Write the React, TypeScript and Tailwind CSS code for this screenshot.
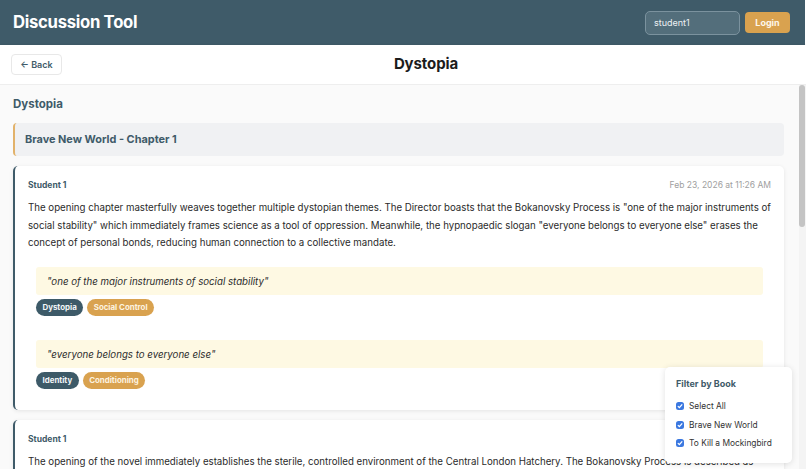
const font = { fontFamily: "Inter, 'Liberation Sans', sans-serif" };

function Check() {
  return (
    <span className="flex h-[8px] w-[8px] items-center justify-center rounded-[2.5px] bg-[#3b78e0]">
      <svg viewBox="0 0 10 10" className="h-[8px] w-[8px]" fill="none" stroke="#fff" strokeWidth="1.6">
        <path d="M2.3 5.2 4.2 7.1 7.8 3" />
      </svg>
    </span>
  );
}

function Tag({ children, amber }: { children: string; amber?: boolean }) {
  return (
    <span className={`flex h-[17px] items-center rounded-[9px] px-[6.5px] pt-[1px] text-[7.9px] font-bold ${amber ? "bg-[#d9a24f] text-[#fdf3e0]" : "bg-[#3d5a68] text-[#f2f6f8]"}`}>
      {children}
    </span>
  );
}

function Quote({ text, tags }: { text: string; tags: string[] }) {
  return (
    <div className="flex flex-col gap-[4px]">
      <div className="flex h-[28px] items-center rounded-[3px] bg-[#fef9e3] px-[11px] pt-[3px] text-[9.7px] italic text-[#2b2b2b]">{text}</div>
      <div className="flex gap-[4px]">
        <Tag>{tags[0]}</Tag>
        <Tag amber>{tags[1]}</Tag>
      </div>
    </div>
  );
}

export default function App() {
  return (
    <div style={font} className="relative flex h-[469px] w-[806px] flex-col overflow-hidden bg-white text-[#2b2b2b]">
      <header className="mr-[1px] flex h-[45px] shrink-0 items-center justify-between bg-[#3f5b69] pl-[13px] pr-[15px]">
        <h1 className="text-[16.7px] font-bold tracking-[-0.3px] text-white">Discussion Tool</h1>
        <div className="flex items-center gap-[5px]">
          <div className="flex h-[24px] w-[95px] items-center rounded-[5px] border border-[#7b929e] bg-[#536e7b] px-[8px] text-[9px] text-[#eef2f4]">student1</div>
          <button className="flex h-[21px] w-[45px] items-center justify-center rounded-[4px] bg-[#d9a24f] text-[9px] font-bold text-[#fdf6ea]">Login</button>
        </div>
      </header>
      <div className="flex h-[40px] shrink-0 items-center border-b border-[#eeeeee] bg-white pl-[11px] pr-[16px] shadow-[0_-1px_2px_rgba(0,0,0,0.05)]">
        <button className="flex h-[21px] w-[51px] items-center justify-center rounded-[4px] border border-[#e8e8e8] bg-white text-[9px] font-semibold text-[#3f5b69]">← Back</button>
        <h2 className="flex-1 text-center text-[15px] font-bold tracking-[-0.1px] text-[#1c1c1c]">Dystopia</h2>
      </div>
      <div className="flex min-h-0 flex-1">
        <main className="min-w-0 flex-1 overflow-hidden bg-[#fafafa] pl-[13px] pr-[15px] pt-[12px]">
          <h3 className="text-[11.5px] font-bold leading-[15px] text-[#3f5b69]">Dystopia</h3>
          <div className="mt-[11px] flex h-[33px] items-center rounded-[4px] border-l-2 border-[#e2b26a] bg-[#f0f1f3] pl-[10px] text-[10.9px] font-bold text-[#3f5b69]">Brave New World - Chapter 1</div>
          <article className="mt-[10px] h-[244px] rounded-[5px] border-l-2 border-[#3f5b69] bg-white pl-[13px] pr-[13px] pt-[13px] shadow-[0_1px_4px_rgba(0,0,0,0.09)]">
            <div className="flex items-center justify-between leading-[12px]">
              <span className="text-[8.5px] font-bold text-[#3f5b69]">Student 1</span>
              <span className="text-[8.5px] text-[#a0a0a0]">Feb 23, 2026 at 11:26 AM</span>
            </div>
            <p className="mt-[8px] text-[9.7px] leading-[17.5px] text-[#2b2b2b]">
              The opening chapter masterfully weaves together multiple dystopian themes. The Director boasts that the Bokanovsky Process is "one of the major instruments of social stability" which immediately frames science as a tool of oppression. Meanwhile, the hypnopaedic slogan "everyone belongs to everyone else" erases the concept of personal bonds, reducing human connection to a collective mandate.
            </p>
            <div className="mx-[8px] mt-[15px] flex flex-col gap-[24px]">
              <Quote text={'"one of the major instruments of social stability"'} tags={["Dystopia", "Social Control"]} />
              <Quote text={'"everyone belongs to everyone else"'} tags={["Identity", "Conditioning"]} />
            </div>
          </article>
          <article className="mt-[10px] h-[120px] rounded-[5px] border-l-2 border-[#3f5b69] bg-white pl-[13px] pr-[13px] pt-[13px] shadow-[0_1px_4px_rgba(0,0,0,0.09)]">
            <span className="block text-[8.5px] font-bold leading-[12px] text-[#3f5b69]">Student 1</span>
            <p className="mt-[8px] text-[9.7px] leading-[17.5px] text-[#2b2b2b]">
              The opening of the novel immediately establishes the sterile, controlled environment of the Central London Hatchery. The Bokanovsky Process is described as
            </p>
          </article>
        </main>
        <div className="w-[7px] shrink-0 bg-[#f4f4f4]">
          <div className="mr-[1px] h-[142px] rounded-[3px] bg-[#c4c4c4]"></div>
        </div>
      </div>
      <aside className="absolute left-[665px] top-[367px] h-[96px] w-[127px] rounded-[5px] bg-white px-[11px] pt-[11px] shadow-[0_1px_6px_rgba(0,0,0,0.12)]">
        <div className="text-[9px] font-bold leading-[12px] text-[#3f5b69]">Filter by Book</div>
        <div className="mt-[10px] flex flex-col gap-[6px] text-[8.4px] leading-[12.5px] text-[#333333]">
          {["Select All", "Brave New World", "To Kill a Mockingbird"].map((label) => (
            <label key={label} className="flex items-center gap-[5px]">
              <Check />
              {label}
            </label>
          ))}
        </div>
      </aside>
    </div>
  );
}
